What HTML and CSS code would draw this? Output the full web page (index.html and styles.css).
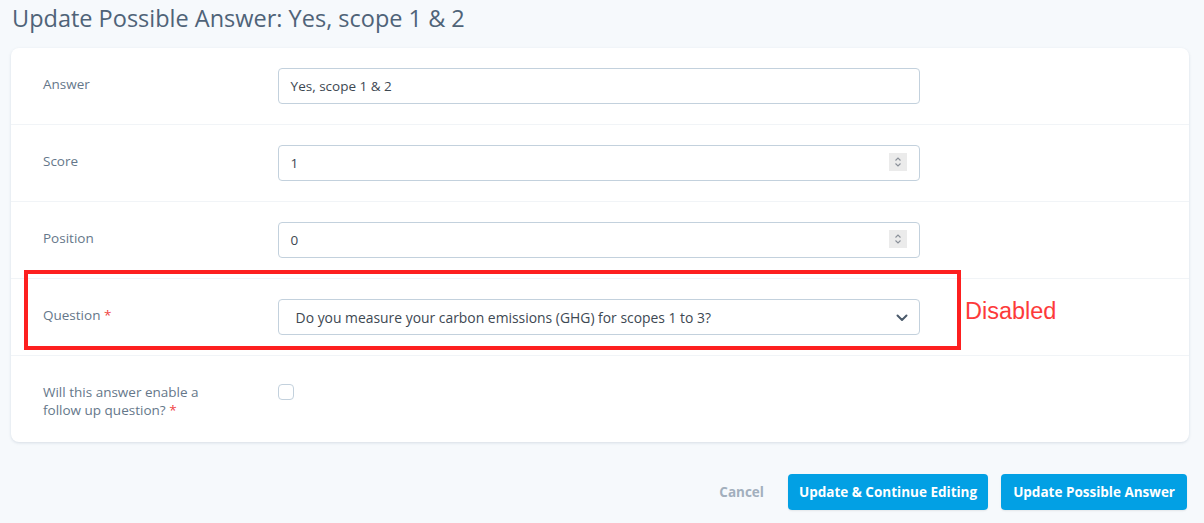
FILE: index.html
```html
<!DOCTYPE html>
<html lang="en">
<head>
<meta charset="utf-8">
<title>Update Possible Answer</title>
<link rel="stylesheet" href="styles.css">
</head>
<body>
<div class="page">
  <h1 class="title">Update Possible Answer: Yes, scope 1 &amp; 2</h1>
  <div class="card">
    <div class="row">
      <div class="label"><label>Answer</label></div>
      <div class="field"><div class="input">Yes, scope 1 &amp; 2</div></div>
    </div>
    <div class="row">
      <div class="label"><label>Score</label></div>
      <div class="field"><div class="input number">1<span class="spin"><svg viewBox="0 0 18 18" width="18" height="18"><path d="M6.5 7.5 L9 5 L11.5 7.5" fill="none" stroke="#8a9099" stroke-width="1.1"/><path d="M6.5 10.5 L9 13 L11.5 10.5" fill="none" stroke="#8a9099" stroke-width="1.1"/></svg></span></div></div>
    </div>
    <div class="row">
      <div class="label"><label>Position</label></div>
      <div class="field"><div class="input number">0<span class="spin"><svg viewBox="0 0 18 18" width="18" height="18"><path d="M6.5 7.5 L9 5 L11.5 7.5" fill="none" stroke="#8a9099" stroke-width="1.1"/><path d="M6.5 10.5 L9 13 L11.5 10.5" fill="none" stroke="#8a9099" stroke-width="1.1"/></svg></span></div></div>
    </div>
    <div class="row">
      <div class="label"><label>Question <span class="req">*</span></label></div>
      <div class="field"><div class="input select">Do you measure your carbon emissions (GHG) for scopes 1 to 3?<svg class="chev" viewBox="0 0 12 8" width="12" height="8"><path d="M1.5 1.5 L6 6 L10.5 1.5" fill="none" stroke="#4b5a6b" stroke-width="2" stroke-linecap="round" stroke-linejoin="round"/></svg></div></div>
    </div>
    <div class="row last">
      <div class="label"><label>Will this answer enable a follow up question?&nbsp;<span class="req">*</span></label></div>
      <div class="field"><span class="checkbox"></span></div>
    </div>
  </div>
  <div class="actions">
    <a class="cancel">Cancel</a>
    <button class="btn">Update &amp; Continue Editing</button>
    <button class="btn">Update Possible Answer</button>
  </div>
  <div class="annot-box"></div>
  <div class="annot-text">Disabled</div>
</div>
</body>
</html>
```
FILE: styles.css
```css
html, body {
  margin: 0;
  padding: 0;
  background: #f6f9fc;
}
body {
  font-family: "Open Sans", "Lato", sans-serif;
  width: 1204px;
  height: 523px;
  overflow: hidden;
}
.page {
  position: relative;
  padding: 0 15px 0 11px;
}
.title {
  margin: 0 0 12px 1px;
  font-size: 23.5px;
  line-height: 36px;
  font-weight: 400;
  color: #4f6378;
}
.card {
  background: #fff;
  border-radius: 8px;
  box-shadow: 0 1px 3px rgba(70, 100, 130, 0.18);
}
.row {
  display: flex;
  padding: 20px 0;
  border-bottom: 1px solid #f1f4f7;
}
.row.last {
  border-bottom: none;
  padding-bottom: 23px;
}
.label {
  width: calc(20% - 1px);
  box-sizing: border-box;
  padding: 8px 32px 0;
  font-size: 13.5px;
  line-height: 1.3;
  color: #65778a;
}
.req {
  color: #ef4444;
}
.field {
  width: 60%;
  box-sizing: border-box;
  padding: 0 32px;
}
.input {
  position: relative;
  box-sizing: border-box;
  height: 36px;
  border: 1px solid #c3d1dd;
  border-radius: 4px;
  padding: 0 12px;
  font-size: 13.5px;
  line-height: 34px;
  color: #3d4852;
}
.spin {
  position: absolute;
  right: 12px;
  top: 7px;
  width: 18px;
  height: 18px;
  background: #ebebeb;
  display: flex;
}
.input.select {
  padding-left: 17px;
  font-size: 13.9px;
  line-height: 35px;
}
.chev {
  position: absolute;
  right: 11px;
  top: 14px;
}
.checkbox {
  display: block;
  margin-top: 8px;
  width: 16px;
  height: 16px;
  box-sizing: border-box;
  border: 1px solid #c3d1dd;
  border-radius: 4px;
}
.actions {
  display: flex;
  justify-content: flex-end;
  align-items: center;
  margin-top: 32px;
  padding-right: 2px;
  gap: 13px;
}
.cancel {
  font-size: 13.5px;
  font-weight: 700;
  color: #a2afbd;
  margin-right: 11px;
}
.btn {
  height: 36px;
  border: none;
  border-radius: 4px;
  background: #02a0e4;
  color: #fff;
  font-family: inherit;
  font-size: 13.5px;
  font-weight: 700;
  padding: 0 12px;
  box-shadow: 0 1px 2px rgba(0, 0, 0, 0.08);
}
.btn:first-of-type {
  padding: 0 11px;
}
.annot-box {
  position: absolute;
  left: 24px;
  top: 270px;
  width: 937px;
  height: 80px;
  box-sizing: border-box;
  border: 4px solid #fd1f1f;
}
.annot-text {
  position: absolute;
  left: 965px;
  top: 297px;
  font-family: "Liberation Sans", Arial, sans-serif;
  font-size: 23.5px;
  line-height: 28px;
  color: #fd3a3a;
}
```
